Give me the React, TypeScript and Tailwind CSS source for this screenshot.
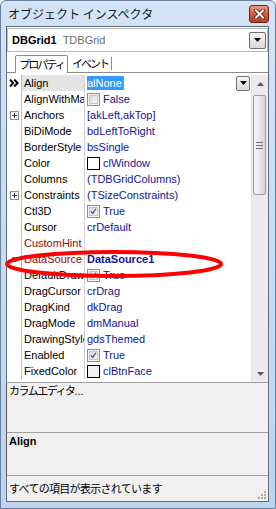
import React from 'react';

type Prop = {
  name: string;
  value: string;
  kind?: 'check' | 'color';
  checked?: boolean;
  swatch?: string;
  expand?: boolean;
  linked?: boolean; // reference property, drawn in maroon
  bold?: boolean;
};

const props: Prop[] = [
  { name: 'Align', value: 'alNone' },
  { name: 'AlignWithMargins', value: 'False', kind: 'check', checked: false },
  { name: 'Anchors', value: '[akLeft,akTop]', expand: true },
  { name: 'BiDiMode', value: 'bdLeftToRight' },
  { name: 'BorderStyle', value: 'bsSingle' },
  { name: 'Color', value: 'clWindow', kind: 'color', swatch: '#ffffff' },
  { name: 'Columns', value: '(TDBGridColumns)' },
  { name: 'Constraints', value: '(TSizeConstraints)', expand: true },
  { name: 'Ctl3D', value: 'True', kind: 'check', checked: true },
  { name: 'Cursor', value: 'crDefault' },
  { name: 'CustomHint', value: '', linked: true },
  { name: 'DataSource', value: 'DataSource1', linked: true, bold: true },
  { name: 'DefaultDrawing', value: 'True', kind: 'check', checked: true },
  { name: 'DragCursor', value: 'crDrag' },
  { name: 'DragKind', value: 'dkDrag' },
  { name: 'DragMode', value: 'dmManual' },
  { name: 'DrawingStyle', value: 'gdsThemed' },
  { name: 'Enabled', value: 'True', kind: 'check', checked: true },
  { name: 'FixedColor', value: 'clBtnFace', kind: 'color', swatch: '#f0f0f0' },
];

const DropButton = ({ w, h }: { w: string; h: string }) => (
  <div className={`${w} ${h} shrink-0 rounded-[2px] border border-[#707070] bg-gradient-to-b from-[#f4f4f4] to-[#dadada] flex items-center justify-center`}>
    <svg width="7" height="4" viewBox="0 0 7 4">
      <path d="M0 0 H7 L3.5 4 Z" fill="#000" />
    </svg>
  </div>
);

const Checkbox = ({ checked }: { checked?: boolean }) => (
  <div className="w-[13px] h-[13px] shrink-0 border border-[#8e8f8f] bg-[#f4f4f4] p-[1px]">
    <div className="w-full h-full border border-[#c6c6c6] bg-gradient-to-br from-[#d8d8d8] to-[#f6f6f6] flex items-center justify-center">
      {checked && (
        <svg width="9" height="9" viewBox="0 0 9 9">
          <path d="M1.5 4.5 L3.6 7 L7.6 1.2" stroke="#4b5f95" strokeWidth="1.8" fill="none" />
        </svg>
      )}
    </div>
  </div>
);

function PropRow({ p, index }: { p: Prop; index: number }) {
  const selected = index === 0;
  return (
    <div className="h-[16px] flex">
      <div className="w-[14px] shrink-0 flex items-center justify-center">
        {selected && (
          <svg width="10" height="8" viewBox="0 0 10 8">
            <path d="M1 0.6 L4.3 4 L1 7.4 M5.3 0.6 L8.6 4 L5.3 7.4" stroke="#000" strokeWidth="2" fill="none" />
          </svg>
        )}
        {p.expand && (
          <div className="w-[9px] h-[9px] border border-[#919191] bg-white flex items-center justify-center">
            <svg width="5" height="5" viewBox="0 0 5 5">
              <path d="M0 2.5 H5 M2.5 0 V5" stroke="#333" strokeWidth="1" />
            </svg>
          </div>
        )}
        {p.linked && p.bold && <div className="w-[5px] h-[5px] bg-[#8a9ab4] border border-[#5d6f8e]" />}
      </div>
      <div
        className={`w-[63px] shrink-0 border-l border-[#bdbdbd] pl-[2px] flex items-center overflow-hidden whitespace-nowrap ${
          selected ? 'bg-[#e4e4e4]' : ''
        } ${p.linked ? 'text-[#8e0b0b]' : 'text-black'}`}
      >
        {p.name}
      </div>
      <div className="flex-1 min-w-0 border-l border-[#d0d0d0] pl-[2px] flex items-center overflow-hidden whitespace-nowrap text-[#14149a]">
        {selected ? (
          <>
            <span className="bg-[#3399ff] text-white h-[14px] leading-[14px] pr-[1px]">alNone</span>
            <span className="w-[1px] h-[14px] bg-[#d88a3a]" />
            <div className="flex-1" />
            <DropButton w="w-[14px]" h="h-[15px]" />
            <div className="w-[1px]" />
          </>
        ) : p.kind === 'check' ? (
          <>
            <Checkbox checked={p.checked} />
            <span className="ml-[3px]">{p.value}</span>
          </>
        ) : p.kind === 'color' ? (
          <>
            <div className="w-[13px] h-[13px] shrink-0 border border-black" style={{ backgroundColor: p.swatch }} />
            <span className="ml-[3px]">{p.value}</span>
          </>
        ) : (
          <span className={p.bold ? 'font-bold' : ''}>{p.value}</span>
        )}
      </div>
    </div>
  );
}

export default function App() {
  return (
    <div className="relative w-[276px] h-[509px] flex flex-col bg-gradient-to-b from-[#d3e3f5] to-[#bdd3ee] border border-[#6a819e] rounded-t-[6px] font-['Liberation_Sans','Noto_Sans_CJK_JP',sans-serif] text-[11px] leading-none text-black overflow-hidden">
      {/* title bar */}
      <div className="h-[25px] shrink-0 flex items-center pl-[7px] pr-[6px]">
        <span className="font-['Noto_Sans_CJK_JP',sans-serif] text-[12px] text-[#0c1a2c]">オブジェクト インスペクタ</span>
        <div className="ml-auto w-[20px] h-[18px] rounded-[3px] border border-[#6e2517] bg-gradient-to-b from-[#e89a84] via-[#d45a40] to-[#c13a1f] flex items-center justify-center">
          <svg width="11" height="10" viewBox="0 0 11 10">
            <path d="M2 1.5 L9 8.5 M9 1.5 L2 8.5" stroke="#4a1a12" strokeWidth="3.6" strokeLinecap="square" />
            <path d="M2 1.5 L9 8.5 M9 1.5 L2 8.5" stroke="#fff" strokeWidth="2" strokeLinecap="square" />
          </svg>
        </div>
      </div>

      {/* client area */}
      <div className="flex-1 ml-[5px] mr-[6px] mb-[6px] border border-[#5d6d82] bg-white flex flex-col">
        <div className="mt-[1px] h-[24px] shrink-0 border border-[#b9b9b9] bg-white flex items-center pl-[4px]">
          <span className="font-bold">DBGrid1</span>
          <span className="ml-[6px] text-[#6b6b6b]">TDBGrid</span>
          <div className="ml-auto mr-[1px]">
            <DropButton w="w-[17px]" h="h-[17px]" />
          </div>
        </div>

        <div className="h-[21px] shrink-0 border-b border-[#8c8c8c] flex items-end pl-[8px] font-['Noto_Sans_CJK_JP',sans-serif]">
          <div className="w-[53px] h-[18px] -mb-[1px] border border-b-0 border-[#8c8c8c] rounded-t-[2px] bg-white flex items-center justify-center tracking-[-2px]">
            プロパティ
          </div>
          <div className="h-[17px] flex items-center">
            <div className="pl-[4px] pr-[3px] h-[13px] border-r border-[#8c8c8c] flex items-center tracking-[-2px]">イベント</div>
          </div>
        </div>

        <div className="h-[2px] shrink-0" />

        <div className="h-[307px] shrink-0 flex">
          <div className="flex-1 min-w-0">
            {props.map((p, i) => (
              <PropRow key={p.name} p={p} index={i} />
            ))}
          </div>
          <div className="w-[17px] shrink-0 flex flex-col bg-[#ebebeb] border-l border-[#e2e2e2]">
            <div className="h-[17px] flex items-center justify-center">
              <svg width="7" height="4" viewBox="0 0 7 4">
                <path d="M0 4 H7 L3.5 0 Z" fill="#5a5a5a" />
              </svg>
            </div>
            <div className="mt-[3px] mx-[1px] mr-[2px] h-[100px] rounded-[2px] border border-[#9b9b9b] bg-gradient-to-r from-[#f6f6f6] via-[#e8e8e8] to-[#d5d5d5] flex items-center justify-center">
              <svg width="7" height="7" viewBox="0 0 7 7">
                <path d="M0 0.5 H7 M0 3.5 H7 M0 6.5 H7" stroke="#6f6f6f" strokeWidth="1" />
              </svg>
            </div>
            <div className="flex-1" />
            <div className="h-[17px] flex items-center justify-center">
              <svg width="7" height="4" viewBox="0 0 7 4">
                <path d="M0 0 H7 L3.5 4 Z" fill="#5a5a5a" />
              </svg>
            </div>
          </div>
        </div>

        <div className="h-[50px] shrink-0 border-t border-[#a0a0a0] bg-[#f0f0f0] -ml-[1px] border-l border-l-[#555555] pl-[2px] pt-[2px]">
          <span className="font-['Noto_Sans_CJK_JP',sans-serif] tracking-[-1.5px]">カラムエディタ</span>
          <span>...</span>
        </div>

        <div className="h-[43px] shrink-0 border-t border-[#a0a0a0] bg-[#f0f0f0] -ml-[1px] border-l border-l-[#555555] pl-[2px] pt-[3px]">
          <span className="font-bold">Align</span>
        </div>

        <div className="flex-1 border-t border-[#a0a0a0] bg-[#f0f0f0] flex items-center pl-[2px] relative">
          <span className="font-['Noto_Sans_CJK_JP',sans-serif] tracking-[-0.7px]">すべての項目が表示されています</span>
          <svg className="absolute right-[1px] bottom-[1px]" width="10" height="10" viewBox="0 0 10 10">
            <g fill="#a9a9a9">
              <rect x="7" y="1" width="2" height="2" />
              <rect x="4" y="4" width="2" height="2" />
              <rect x="7" y="4" width="2" height="2" />
              <rect x="1" y="7" width="2" height="2" />
              <rect x="4" y="7" width="2" height="2" />
              <rect x="7" y="7" width="2" height="2" />
            </g>
          </svg>
        </div>
      </div>

      {/* red annotation around DataSource */}
      <svg className="absolute left-0 top-0 pointer-events-none" width="276" height="509" viewBox="0 0 276 509">
        <ellipse cx="113" cy="263" rx="107" ry="12" fill="none" stroke="#ff0000" strokeWidth="4" />
      </svg>
    </div>
  );
}
